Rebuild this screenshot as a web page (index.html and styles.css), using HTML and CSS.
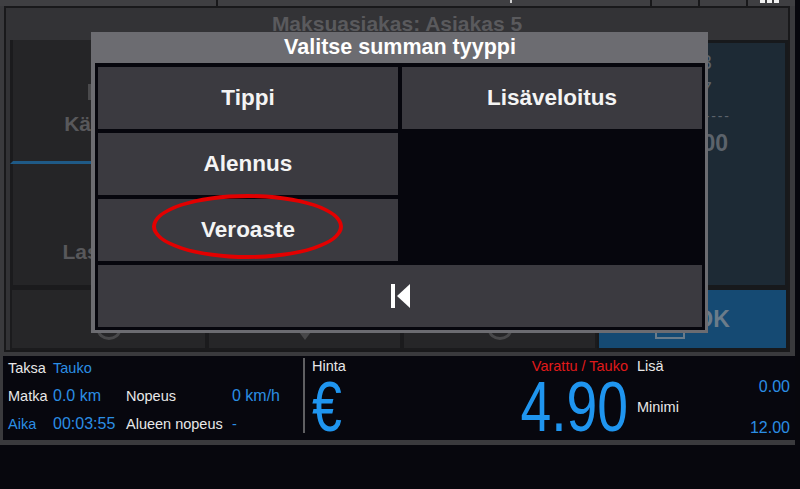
FILE: index.html
```html
<!DOCTYPE html>
<html lang="fi">

<head>
    <meta charset="UTF-8">
    <meta name="viewport" content="width=device-width, initial-scale=1.0">
    <title>Maksu</title>
    <link rel="stylesheet" href="styles.css">
</head>

<body>

    <div class="app">

        <!-- Top tab bar (mostly scrolled off) -->
        <div class="topbar">
            <div class="tab tab-a"></div>
            <div class="tab tab-b"><span class="tab-mark"></span></div>
            <div class="tab tab-c"></div>
            <div class="tab tab-d"></div>
            <div class="tab tab-e">
                <span class="dots"><i></i><i></i><i></i></span>
            </div>
        </div>

        <!-- Payment screen (dimmed behind the dialog) -->
        <div class="screen">
            <div class="screen-title">Maksuasiakas: Asiakas 5</div>

            <div class="pay-grid">
                <div class="pay-btn cash">
                    <span class="ico-card"></span>
                    <span class="pay-label">Käteinen</span>
                </div>
                <div class="pay-center"></div>
                <div class="summary">
                    <div class="sum-line short">4.83</div>
                    <div class="sum-line short">0.07</div>
                    <div class="sum-line dashes">- - - - - - -</div>
                    <div class="sum-line total">5.00</div>
                </div>
                <div class="pay-btn invoice">
                    <span class="ico-doc"></span>
                    <span class="pay-label">Laskutus</span>
                </div>
                <div class="pay-small"><span class="ico-round"></span></div>
                <div class="pay-small"><span class="ico-tri"></span></div>
                <div class="pay-small"><span class="ico-round"></span></div>
                <div class="ok-btn">
                    <span class="ico-ok"></span>
                    <span class="ok-label">OK</span>
                </div>
            </div>
        </div>

        <!-- Taximeter status bar -->
        <div class="status">
            <div class="trip">
                <span>Taksa</span><span class="val">Tauko</span><span></span><span></span>
                <span>Matka</span><span class="val num">0.0 km</span><span>Nopeus</span><span class="val num">0 km/h</span>
                <span class="val">Aika</span><span class="val num">00:03:55</span><span>Alueen nopeus</span><span class="val">-</span>
            </div>
            <div class="divider"></div>
            <div class="price">
                <div class="hinta">
                    <div class="small-label">Hinta</div>
                    <div class="big euro">€</div>
                </div>
                <div class="fare">
                    <div class="state">Varattu / Tauko</div>
                    <div class="big amount">4.90</div>
                </div>
                <div class="extras">
                    <div class="small-label">Lisä</div>
                    <div class="extra-val">0.00</div>
                    <div class="small-label">Minimi</div>
                    <div class="extra-val">12.00</div>
                </div>
            </div>
        </div>
    </div>

    <!-- Sum type dialog -->
    <div class="modal">
        <div class="modal-title">Valitse summan tyyppi</div>
        <div class="modal-body">
            <div class="choice">Tippi</div>
            <div class="choice">Lisäveloitus</div>
            <div class="choice">Alennus</div>
            <div class="empty"></div>
            <div class="choice">Veroaste</div>
            <div class="choice back">
                <svg width="19" height="24" viewBox="0 0 19 24">
                    <rect x="0" y="0" width="4" height="24" fill="#fff"/>
                    <polygon points="19,0 19,24 6,12" fill="#fff"/>
                </svg>
            </div>
        </div>
        <!-- highlight drawn over the screenshot -->
        <div class="mark"></div>
    </div>

</body>
</html>
```

FILE: styles.css
```css
body {
    margin: 0;
    width: 800px;
    height: 489px;
    overflow: hidden;
    position: relative;
    background: #07070d;
    font-family: "Liberation Sans", Arial, sans-serif;
}

.app {
    width: 795px;
    background: #3a3a3d;
    padding-bottom: 5px;
}

/* Top bar */
.topbar {
    height: 6px;
    display: flex;
    overflow: hidden;
}

.tab {
    background: #3f3f42;
    border-right: 2px solid #18181a;
    position: relative;
}

.tab-a { width: 216px; }
.tab-b { width: 432px; }
.tab-c { width: 46px; }
.tab-d { width: 46px; }
.tab-e { flex: 1; border-right: none; }

.tab-mark {
    position: absolute;
    left: 292px;
    top: 0;
    width: 2px;
    height: 3px;
    background: #cfcfcf;
}

.dots {
    position: absolute;
    left: 12px;
    top: 0;
    display: flex;
    gap: 2px;
}

.dots i {
    width: 5px;
    height: 3px;
    background: #f2f2f2;
}

/* Payment screen */
.screen {
    margin-left: 4px;
    width: 786px;
    height: 346px;
    box-sizing: border-box;
    border: 2px solid #19191b;
    background: #333336;
}

.screen-title {
    height: 32px;
    line-height: 31px;
    text-align: center;
    color: #5a5a5d;
    font-size: 21px;
    font-weight: bold;
}

.pay-grid {
    display: grid;
    grid-template-columns: 197px 195px 195px 1fr;
    grid-template-rows: 124px 124px 62px;
    padding-left: 4px;
}

.pay-btn {
    background: #252527;
    border: 3px solid #1b1b1d;
    border-top-width: 0;
    display: flex;
    flex-direction: column;
    align-items: center;
    color: #58585b;
    font-weight: bold;
    font-size: 21px;
}

.cash {
    grid-column: 1;
    grid-row: 1;
    border-bottom: 3px solid #1f5a86;
    padding-top: 44px;
}

.invoice {
    grid-column: 1;
    grid-row: 2;
    padding-top: 36px;
}

.ico-card {
    width: 36px;
    height: 10px;
    border: 3px solid #4a4a4c;
    margin-bottom: 12px;
}

.ico-doc {
    width: 20px;
    height: 20px;
    border: 3px solid #4a4a4c;
    margin-bottom: 14px;
}

.pay-center {
    grid-column: 2 / 4;
    grid-row: 1 / 3;
    background: #252527;
}

.summary {
    grid-column: 4;
    grid-row: 1 / 3;
    background: #1d2a35;
    border: 3px solid #17191c;
    padding: 6px 57px 0 0;
    text-align: right;
    color: #5c636b;
    font-size: 20px;
}

.sum-line {
    line-height: 27px;
}

.sum-line.short { padding-right: 16px; }

.sum-line.dashes {
    font-size: 14px;
    letter-spacing: -1px;
}

.sum-line.total {
    font-size: 23px;
    font-weight: bold;
}

.pay-small {
    background: #262628;
    border: 2px solid #1b1b1d;
    display: flex;
    justify-content: center;
    padding-top: 30px;
}

.ico-round {
    width: 18px;
    height: 14px;
    border: 3px solid #48484a;
    border-radius: 50%;
}

.ico-tri {
    width: 0;
    height: 0;
    margin-top: 12px;
    border-left: 6px solid transparent;
    border-right: 6px solid transparent;
    border-top: 8px solid #48484a;
}

.ok-btn {
    background: #154a73;
    border: 2px solid #17191c;
    display: flex;
    align-items: center;
    justify-content: center;
    gap: 10px;
    color: #6b7c8a;
    font-weight: bold;
    font-size: 23px;
}

.ico-ok {
    width: 26px;
    height: 22px;
    border: 2px solid #6b7c8a;
    margin-top: 14px;
}

/* Status bar */
.status {
    margin: 4px 0 0 3px;
    height: 84px;
    background: #07070e;
    display: flex;
    color: #e8e8e8;
    font-size: 14.5px;
}

.trip {
    display: grid;
    grid-template-columns: 45px 73px 106px 71px;
    grid-auto-rows: 28px;
    line-height: 24px;
    padding-left: 5px;
}

.val {
    color: #2b8ee4;
}

.num {
    font-size: 16px;
}

.divider {
    width: 2px;
    height: 75px;
    margin-top: 2px;
    background: #5f5f62;
}

.price {
    flex: 1;
    display: flex;
}

.small-label {
    line-height: 20px;
}

.hinta {
    padding-left: 7px;
}

.big {
    font-size: 70px;
    line-height: 62px;
    color: #1f95ef;
}

.euro {
    transform: scaleX(0.77);
    transform-origin: left;
}

.fare {
    flex: 1;
    text-align: right;
    padding-right: 2px;
}

.state {
    color: #e01a1a;
    line-height: 20px;
}

.amount {
    transform: scaleX(0.79);
    transform-origin: right;
}

.extras {
    width: 165px;
    box-sizing: border-box;
    padding: 0 5px 0 7px;
}

.extras .small-label,
.extra-val {
    line-height: 20.5px;
}

.extra-val {
    text-align: right;
    color: #2b8ee4;
    font-size: 16px;
}

/* Dialog */
.modal {
    position: absolute;
    left: 91px;
    top: 32px;
    width: 617px;
    height: 301px;
    box-sizing: border-box;
    background: #6c6c71;
    padding: 0 3px 3px 4px;
    display: flex;
    flex-direction: column;
}

.modal-title {
    height: 31px;
    line-height: 31px;
    text-align: center;
    color: #ffffff;
    font-size: 21.5px;
    font-weight: bold;
}

.modal-body {
    flex: 1;
    background: #06060d;
    padding: 4px 3px 3px 3px;
    display: grid;
    grid-template-columns: 1fr 1fr;
    grid-template-rows: repeat(4, 62px);
    gap: 4px;
}

.choice {
    background: #3b3a40;
    color: #f4f4f4;
    font-size: 22.5px;
    font-weight: bold;
    display: flex;
    align-items: center;
    justify-content: center;
}

.empty {
    grid-row: 2 / 4;
    grid-column: 2;
}

.back {
    grid-column: 1 / 3;
}

.mark {
    position: absolute;
    left: 61px;
    top: 162px;
    width: 183px;
    height: 57px;
    border: 4px solid #e30000;
    border-radius: 50%;
}
```
